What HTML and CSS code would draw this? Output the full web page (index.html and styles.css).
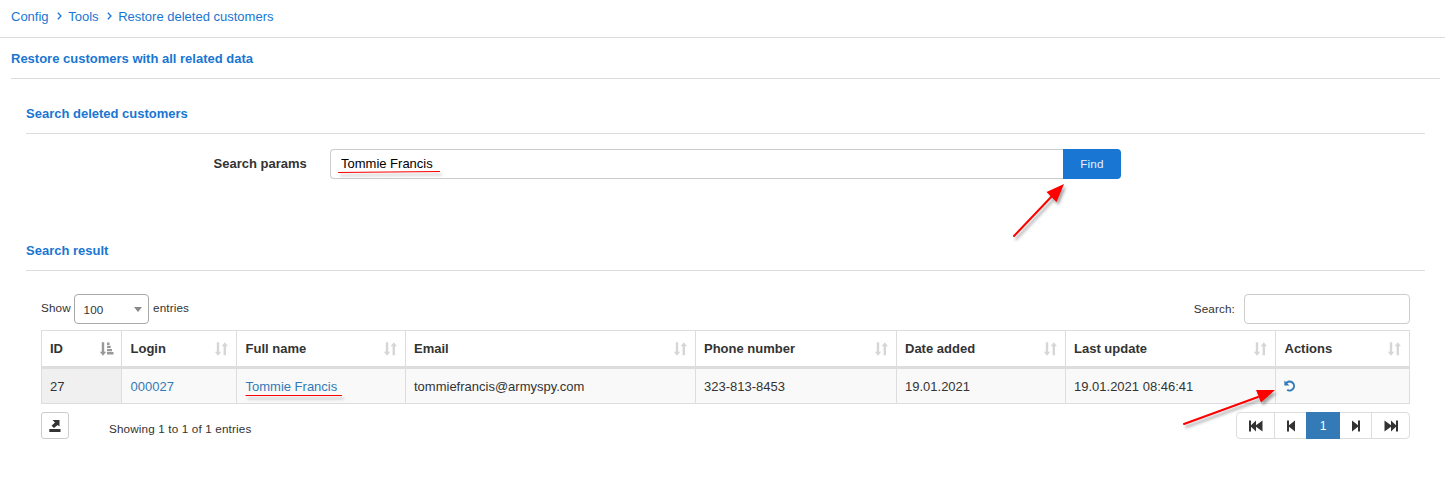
FILE: index.html
```html
<!DOCTYPE html>
<html lang="en">
<head>
<meta charset="utf-8">
<title>Restore deleted customers</title>
<link rel="stylesheet" href="styles.css">
</head>
<body>
<svg class="defs" width="0" height="0">
  <symbol id="sort" viewBox="0 0 13 14"><path d="M1.800.3h2.400v9.500h2L3 13.700-.2 9.800h2zM8.600 13.300H11V4.200h2L9.800.3 6.600 4.200h2z"/></symbol>
  <symbol id="sort-asc" viewBox="0 0 14 14"><path d="M1.800.3h2.400v9.500h2L3 13.700-.2 9.800h2zM7 .5h2.500v2.400H7zM7 3.700h3.700v2.400H7zM7 6.900h5v2.400H7zM7 10.100h6.500v2.400H7z"/></symbol>
  <symbol id="chevron" viewBox="0 0 5 8"><path d="M.8.8 4 4 .8 7.200" fill="none" stroke="#1976d2" stroke-width="1.300"/></symbol>
</svg>
<nav class="crumbs">
  <a>Config</a><svg class="chev"><use href="#chevron"/></svg><a>Tools</a><svg class="chev"><use href="#chevron"/></svg><a>Restore deleted customers</a>
</nav>
<main class="page">
  <h1 class="title">Restore customers with all related data</h1>
  <section class="section">
    <h2 class="title">Search deleted customers</h2>
    <form class="search">
      <label class="search-label" for="q">Search params</label>
      <input class="search-input" id="q" type="text" value="Tommie Francis">
      <button class="find" type="button">Find</button>
    </form>
  </section>
  <section class="section">
    <h2 class="title">Search result</h2>
    <div class="result">
      <div class="controls">
        <span class="show">Show</span>
        <span class="select">100<i class="caret"></i></span>
        <span class="entries">entries</span>
        <label class="filter-label" for="f">Search:</label>
        <input class="filter" id="f" type="text">
      </div>
      <table class="grid">
        <colgroup><col class="c-id"><col class="c-login"><col class="c-name"><col class="c-email"><col class="c-phone"><col class="c-added"><col class="c-update"><col class="c-actions"></colgroup>
        <thead><tr>
          <th><div class="head">ID<svg class="sort asc"><use href="#sort-asc"/></svg></div></th>
          <th><div class="head">Login<svg class="sort"><use href="#sort"/></svg></div></th>
          <th><div class="head">Full name<svg class="sort"><use href="#sort"/></svg></div></th>
          <th><div class="head">Email<svg class="sort"><use href="#sort"/></svg></div></th>
          <th><div class="head">Phone number<svg class="sort"><use href="#sort"/></svg></div></th>
          <th><div class="head">Date added<svg class="sort"><use href="#sort"/></svg></div></th>
          <th><div class="head">Last update<svg class="sort"><use href="#sort"/></svg></div></th>
          <th><div class="head">Actions<svg class="sort"><use href="#sort"/></svg></div></th>
        </tr></thead>
        <tbody><tr>
          <td class="sorted">27</td>
          <td><a class="link">000027</a></td>
          <td><a class="link">Tommie Francis</a></td>
          <td>tommiefrancis@armyspy.com</td>
          <td>323-813-8453</td>
          <td>19.01.2021</td>
          <td>19.01.2021 08:46:41</td>
          <td><svg class="undo" viewBox="0 0 12 12"><path d="M2 3.300A4.500 4.500 0 1 1 3.200 9.900" fill="none" stroke="#337ab7" stroke-width="2"/><path d="M.4.400v5h5z" fill="#337ab7"/></svg></td>
        </tr></tbody>
      </table>
      <div class="footer">
        <button class="export" type="button"><svg width="12" height="12" viewBox="0 0 12 12"><path d="M.3 9h11.200v3H.3zM3.500 0H10.500v6.500L8.700 4.900 5 8 2.500 5.700 6 2.500z" fill="#333"/></svg></button>
        <span class="info">Showing 1 to 1 of 1 entries</span>
        <div class="pager">
          <a class="page-btn first"><svg width="14" height="12" viewBox="0 0 14 12"><path d="M0 .5h2v4.700L7 .5v4.700L13.500.5v11L7 6.800v4.700L2 6.800v4.700H0z"/></svg></a>
          <a class="page-btn prev"><svg width="8" height="12" viewBox="0 0 8 12"><path d="M0 .5h2v4.700L8 .5v11L2 6.800v4.700H0z"/></svg></a>
          <a class="page-btn current">1</a>
          <a class="page-btn next"><svg width="8" height="12" viewBox="0 0 8 12"><path d="M8 .5H6v4.700L0 .5v11l6-4.700v4.700h2z"/></svg></a>
          <a class="page-btn last"><svg width="14" height="12" viewBox="0 0 14 12"><path d="M14 .5h-2v4.700L7 .5v4.700L.5.5v11L7 6.800v4.700l5-4.700v4.700h2z"/></svg></a>
        </div>
      </div>
    </div>
  </section>
</main>
<svg class="marks" width="1445" height="488" viewBox="0 0 1445 488">
  <g stroke="#f00" fill="#f00" stroke-linecap="round">
    <path d="M338.500 172.500 439.500 171.500M246 395.500H341.500" stroke-width="1.200"/>
    <path d="M1014 236 1053 195M1184 424 1258 397" stroke-width="2"/>
    <path d="M1064 184 1056.500 202 1046.500 192zM1275 390 1261 402.500 1256 390z" stroke="none"/>
  </g>
</svg>
</body>
</html>
```
FILE: styles.css
```css
* { box-sizing: border-box; }
body { margin: 0; background: #fff; color: #333; font: 13px/18px "Liberation Sans", Arial, sans-serif; }
.defs { display: block; }
.crumbs { display: flex; height: 38px; padding: 8px 11px 0; border-bottom: 1px solid #ddd; color: #1976d2; }
.chev { width: 5px; height: 8px; margin: 4px 6.600px 0 8px; }
.page { padding: 0 5px 0 11px; }
.title { margin: 0; font-size: 13px; font-weight: bold; color: #1976d2; border-bottom: 1px solid #ddd; }
h1.title { height: 41px; padding-top: 12px; }
.section { padding: 0 15px; }
h2.title { height: 29px; }
.section:nth-of-type(1) { padding-top: 26px; height: 163px; }
.search { display: flex; padding: 15px 0 0 187.500px; }
.search-label { width: 116.500px; padding-top: 6px; font-weight: bold; }
.search-input { width: 733px; height: 30px; padding: 0 10px 2px; border: 1px solid #ccc; border-right: 0; border-radius: 4px 0 0 4px; font: inherit; color: #000; }
.find { width: 58px; height: 30px; border: 0; border-radius: 0 4px 4px 0; padding: 0 0 1px; background: #1976d2; color: #e8f1fb; font: 11.700px "Liberation Sans", Arial, sans-serif; letter-spacing: .15px; }
.result { padding: 23px 15px 0; }
.controls { display: flex; height: 36px; font-size: 11.700px; letter-spacing: .13px; }
.show { width: 33px; padding-top: 5px; }
.select { display: flex; align-items: center; justify-content: space-between; width: 75px; height: 30px; padding: 2px 6px 0 8.500px; border: 1px solid #aaa; border-radius: 4px; }
.caret { border: 4px solid transparent; border-top: 5px solid #888; border-bottom: 0; margin-bottom: 2px; }
.entries { padding: 5px 0 0 4px; }
.filter-label { margin-left: auto; padding-top: 6px; }
.filter { width: 166px; height: 30px; margin-left: 9px; border: 1px solid #ccc; border-radius: 4px; }
.grid { width: 1369px; table-layout: fixed; border-collapse: separate; border-spacing: 0; border-right: 1px solid #ddd; }
.c-id { width: 80px; } .c-login { width: 115px; } .c-name { width: 169px; } .c-email { width: 290px; }
.c-phone { width: 201px; } .c-added { width: 169px; } .c-update { width: 210px; } .c-actions { width: 134px; }
.grid th, .grid td { padding: 0 8px; border-left: 1px solid #ddd; text-align: left; white-space: nowrap; }
.grid th:nth-child(2), .grid td:nth-child(2), .grid th:nth-child(3), .grid td:nth-child(3), .grid th:last-child { padding-left: 8.500px; }
.grid th { height: 39px; border-top: 1px solid #ddd; border-bottom: 3px solid #ddd; }
.grid td { height: 35px; padding-top: 2px; background: #f9f9f9; border-bottom: 1px solid #ddd; }
.grid td:last-child { padding-top: 0; }
.grid .sorted { background: #f0f0f0; }
.head { display: flex; align-items: center; justify-content: space-between; }
.sort { width: 13px; height: 14px; fill: #d6d6d6; }
.asc { width: 14px; margin-right: -1px; fill: #999; }
.link { color: #337ab7; }
.undo { display: block; width: 12px; height: 12px; }
.footer { display: flex; padding-top: 8px; }
.export { display: flex; align-items: center; justify-content: center; width: 28px; height: 27px; padding: 0; border: 1px solid #ccc; border-radius: 3px; background: #fff; }
.info { padding: 8px 0 0 40px; font-size: 11.700px; letter-spacing: .15px; }
.pager { display: flex; height: 27px; margin-left: auto; border: 1px solid #ddd; border-radius: 4px; }
.page-btn { display: flex; align-items: center; justify-content: center; border-left: 1px solid #ddd; font-size: 12px; fill: #333; }
.first { width: 37px; border: 0; }
.prev { width: 32px; }
.current { width: 34px; height: 27px; margin-top: -1px; border: 0; background: #337ab7; color: #fff; }
.next { width: 31px; border: 0; }
.last { width: 38px; }
.marks { position: absolute; left: 0; top: 0; pointer-events: none; filter: drop-shadow(2px 3px 1.500px rgba(0, 0, 0, .35)); }
```
